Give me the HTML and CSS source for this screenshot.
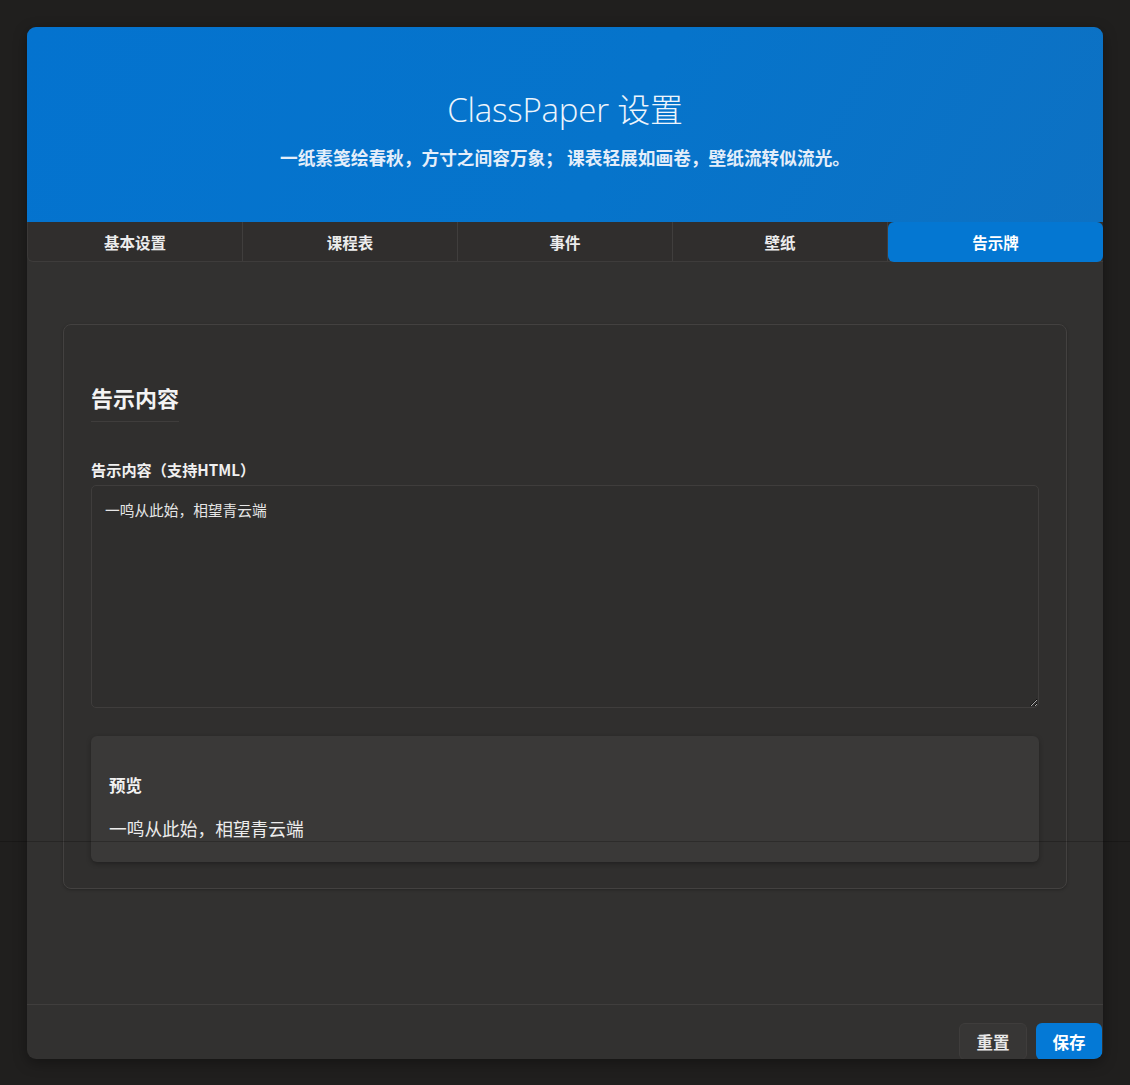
FILE: index.html
```html
<!DOCTYPE html>
<html lang="zh-CN">
<head>
<meta charset="utf-8">
<title>ClassPaper 设置</title>
<link rel="stylesheet" href="styles.css">
</head>
<body>
<div class="window">
  <header class="hero">
    <h1 class="hero-title">ClassPaper 设置</h1>
    <p class="hero-sub">一纸素笺绘春秋，方寸之间容万象； 课表轻展如画卷，壁纸流转似流光。</p>
  </header>
  <nav class="tabs">
    <div class="tab">基本设置</div>
    <div class="tab">课程表</div>
    <div class="tab">事件</div>
    <div class="tab">壁纸</div>
    <div class="tab active">告示牌</div>
  </nav>
  <main class="content">
    <section class="card">
      <h2 class="card-title">告示内容</h2>
      <label class="field-label" for="notice">告示内容（支持HTML）</label>
      <textarea id="notice" class="field">一鸣从此始，相望青云端</textarea>
      <div class="preview">
        <h3 class="preview-title">预览</h3>
        <div class="preview-body">一鸣从此始，相望青云端</div>
      </div>
    </section>
  </main>
  <footer class="footer">
    <button class="btn btn-reset">重置</button>
    <button class="btn btn-save">保存</button>
  </footer>
</div>
<div class="scan-line"></div>
</body>
</html>
```
FILE: styles.css
```css
* { box-sizing: border-box; }
html, body { margin: 0; padding: 0; }
body {
  background: #201f1e;
  font-family: "Noto Sans CJK SC", "Noto Sans", sans-serif;
  color: #ffffff;
  padding: 27px 27px 0 27px;
  height: 1085px;
  overflow: hidden;
}
.window {
  width: 1076px;
  height: 1032px;
  border-radius: 9px;
  overflow: hidden;
  background: #323130;
  display: flex;
  flex-direction: column;
  box-shadow: 0 4px 14px rgba(0,0,0,0.35);
}
.hero {
  height: 195px;
  flex: none;
  background: linear-gradient(120deg, #0473cf 0%, #0674cb 55%, #0d71c3 100%);
  text-align: center;
  padding-top: 59px;
}
.hero-title {
  margin: 0;
  font-family: "Open Sans", "Noto Sans CJK SC", sans-serif;
  font-weight: 300;
  font-size: 33px;
  line-height: 48px;
  color: #eef5fc;
  letter-spacing: -0.2px;
}
.hero-sub {
  margin: 11px 0 0;
  font-size: 17.7px;
  line-height: 24px;
  font-weight: 700;
  color: #e4eefa;
}
.tabs {
  flex: none;
  height: 40px;
  display: flex;
  background: #302e2d;
  border-bottom: 1px solid #3e3c3b;
  border-left: 1px solid #3b3938;
  border-radius: 0 0 0 6px;
}
.tab {
  width: 215px;
  flex: none;
  display: flex;
  align-items: center;
  justify-content: center;
  font-size: 15.5px;
  font-weight: 700;
  color: #ececec;
  border-right: 1px solid #403e3d;
}
.tab.active {
  flex: 1;
  width: auto;
  background: #0477d2;
  color: #ffffff;
  border-radius: 6px;
  border-right: none;
  margin-bottom: -1px;
}
.content {
  flex: 1;
  padding: 62px 36px 0;
}
.card {
  border: 1px solid #434140;
  border-radius: 8px;
  background: #302f2e;
  padding: 27px 27px 26px;
  display: flex;
  flex-direction: column;
  box-shadow: 0 1px 3px rgba(0,0,0,0.25);
}
.card-title {
  margin: 29px 0 0;
  align-self: flex-start;
  font-size: 22px;
  line-height: 33px;
  font-weight: 700;
  color: #f3f3f3;
  padding-bottom: 7px;
  border-bottom: 1px solid #3f3d3c;
}
.field-label {
  margin-top: 36px;
  font-size: 15.2px;
  line-height: 22px;
  font-weight: 700;
  color: #f0f0f0;
}
.field {
  margin-top: 5px;
  height: 223px;
  width: 100%;
  background: #2f2e2d;
  border: 1px solid #3f3d3c;
  border-radius: 5px;
  color: #e6e6e6;
  font-family: "Noto Sans CJK SC", sans-serif;
  font-size: 14.7px;
  line-height: 22px;
  padding: 13px 13px;
  resize: vertical;
  outline: none;
}
.preview {
  margin-top: 28px;
  background: #3a3938;
  border-radius: 6px;
  padding: 18px 18px 21px;
  box-shadow: 0 2px 5px rgba(0,0,0,0.3);
}
.preview-title {
  margin: 19px 0 0;
  font-size: 16.5px;
  line-height: 24px;
  font-weight: 700;
  color: #f2f2f2;
}
.preview-body {
  margin-top: 18px;
  font-size: 17.7px;
  line-height: 26px;
  color: #ececec;
}
.footer {
  flex: none;
  height: 55px;
  border-top: 1px solid #403e3d;
  display: flex;
  justify-content: flex-end;
  align-items: flex-start;
  gap: 9px;
  padding: 18px 1px 0 0;
}
.btn {
  height: 37px;
  border: none;
  border-radius: 6px;
  font-family: "Noto Sans CJK SC", sans-serif;
  font-size: 16.5px;
  font-weight: 700;
  padding: 0;
  cursor: pointer;
}
.btn-reset {
  width: 68px;
  background: #373635;
  border: 1px solid #3f3d3c;
  color: #e8e8e8;
}
.btn-save {
  width: 66px;
  background: #0479d6;
  color: #ffffff;
}
.scan-line {
  position: absolute;
  left: 0;
  right: 0;
  top: 841px;
  height: 1px;
  background: rgba(0,0,0,0.22);
  pointer-events: none;
}
```
